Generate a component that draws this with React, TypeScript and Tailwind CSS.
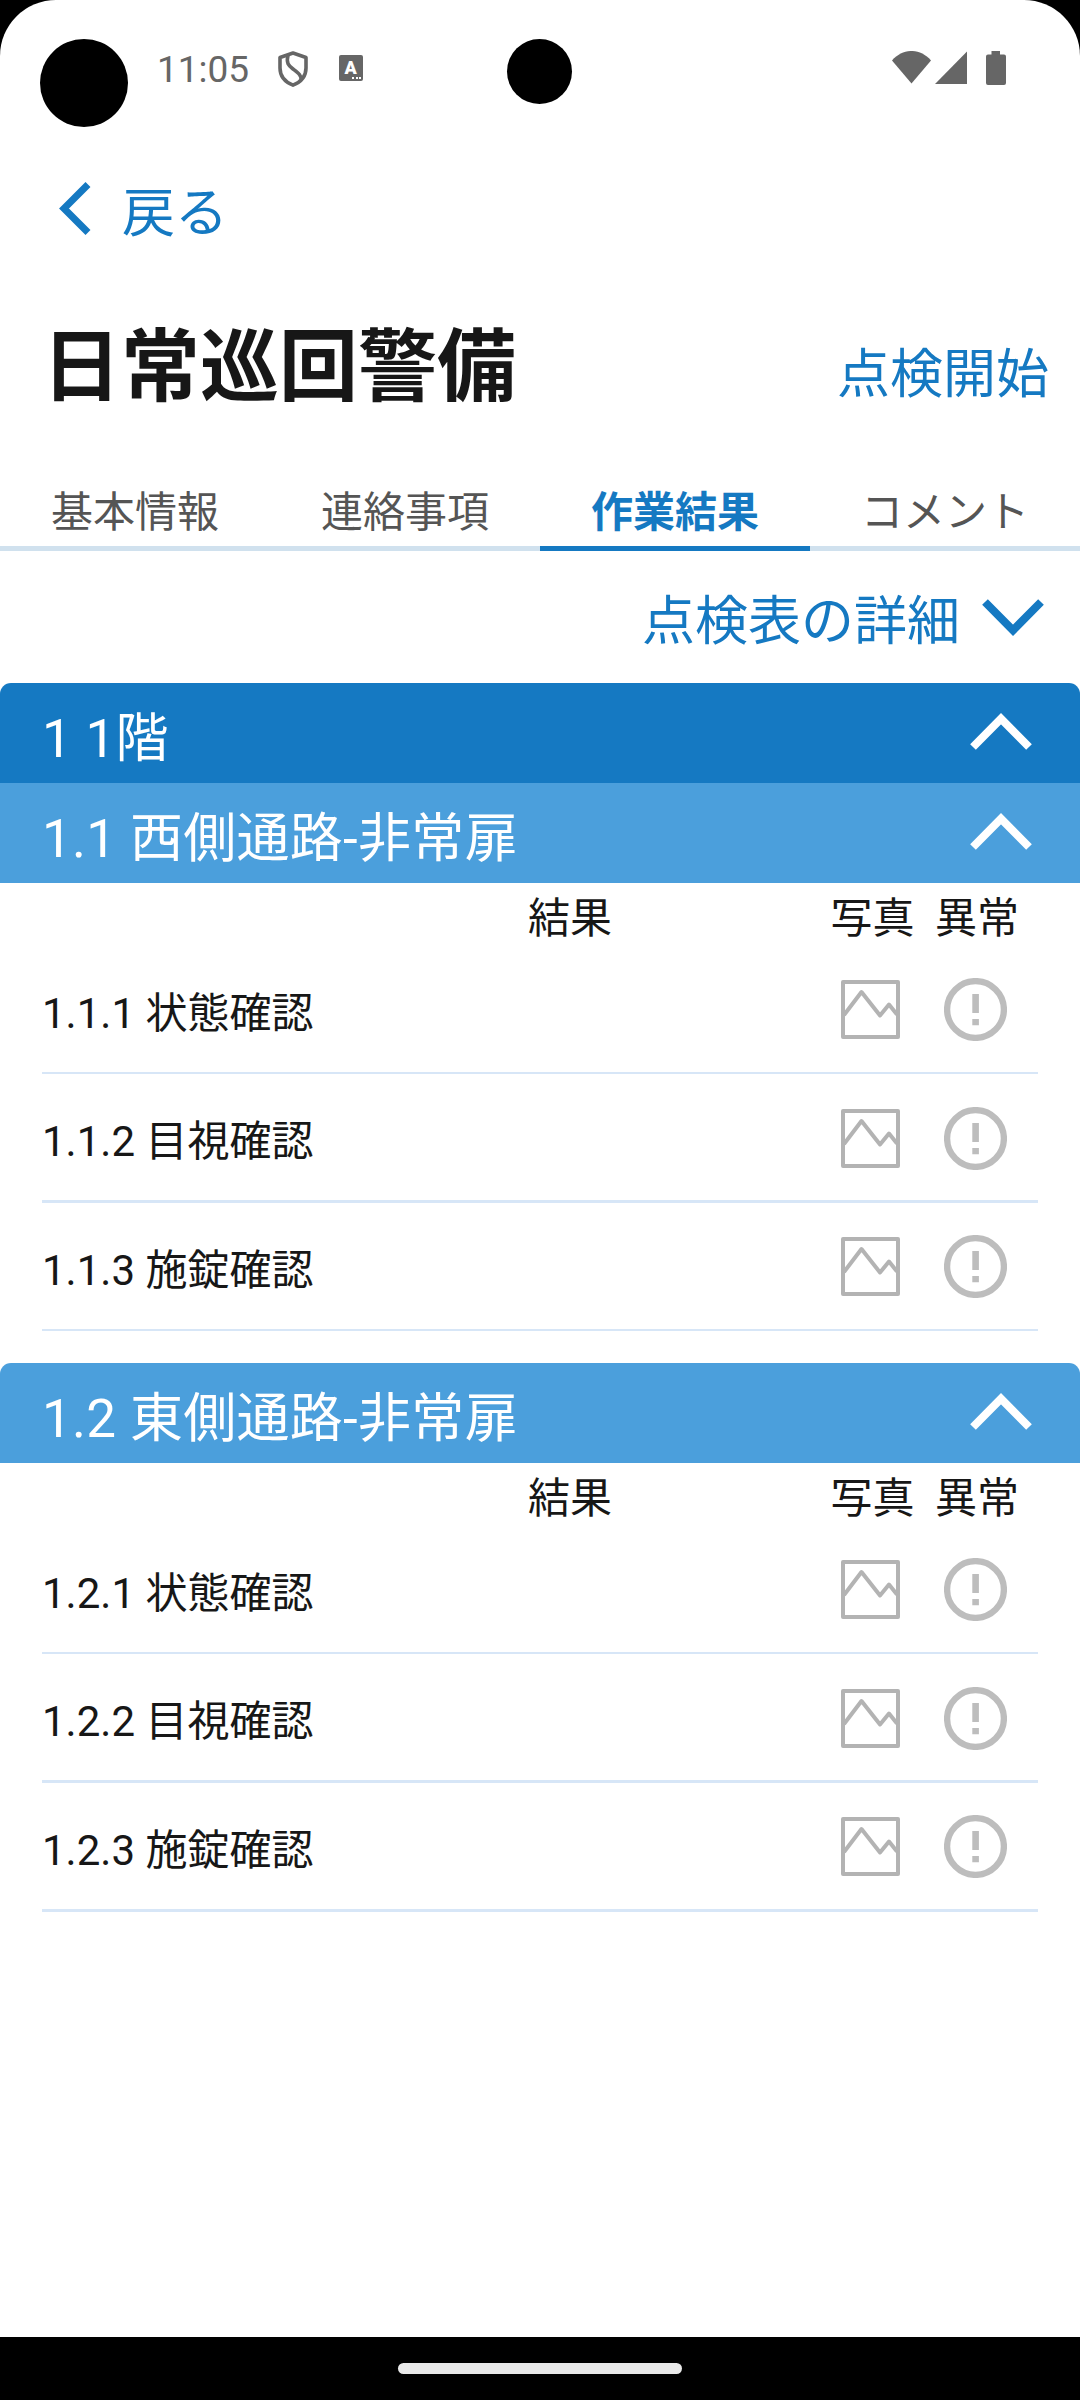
import type { ReactNode } from 'react';
import clsx from 'clsx';

interface Section {
  id: string;
  name: string;
  items: string[];
}

const TABS = ['基本情報', '連絡事項', '作業結果', 'コメント'];
const ACTIVE_TAB = '作業結果';

const SECTIONS: Section[] = [
  { id: '1.1', name: '西側通路-非常扉', items: ['状態確認', '目視確認', '施錠確認'] },
  { id: '1.2', name: '東側通路-非常扉', items: ['状態確認', '目視確認', '施錠確認'] },
];

function Chevron({ className, up = false }: { className?: string; up?: boolean }) {
  return (
    <svg width="62" height="37" viewBox="0 0 62 37" fill="none" stroke="currentColor" strokeWidth="8" className={className}>
      <path d={up ? 'M3 34 31 5.7 59 34' : 'M3 3 31 31.3 59 3'} />
    </svg>
  );
}

function StatusBar() {
  return (
    <div className="flex h-[136px] items-start pt-[39px] text-[#666]">
      <div className="ml-10 size-[88px] rounded-full bg-black" />
      <span className="ml-[29px] mt-[9px] w-[94px] text-[37px] leading-[44px]">11:05</span>
      {/* shield */}
      <svg className="ml-[27px] mt-3" width="30" height="36" viewBox="0 0 30 36" fill="none" stroke="currentColor" strokeWidth="3.6" strokeLinejoin="round">
        <path d="M15 2 28 6.500V17c0 8-5 14-13 17.200C7 31 2 25 2 17V6.500Z" />
        <path d="M10 4C8 12 10.500 14.500 15 18c5 3.800 9 6.500 8 11" />
      </svg>
      {/* keyboard badge */}
      <div className="relative ml-[31px] mt-4 h-[26px] w-6 rounded-[2px] bg-[#666]">
        <span className="absolute left-[5.500px] top-[4px] text-[18px] font-black leading-[18px] text-white">A</span>
        <span className="absolute bottom-[2px] right-[2px] flex gap-[1.500px]">
          <i className="size-[2px] bg-white" />
          <i className="size-[2px] bg-white" />
          <i className="size-[2px] bg-white" />
        </span>
      </div>
      <div className="ml-[144px] size-[65px] rounded-full bg-black" />
      <svg className="ml-[320px] mt-3" width="115" height="35" viewBox="0 0 115 35" fill="currentColor">
        <path d="M0 9.500C11-3.200 28-3.200 39 9.500L19.500 32.500Z" />
        <path d="M43 33 75 .5V33Z" />
        <path d="M99.500 0h8.500v3.500h4a2 2 0 0 1 2 2V32a2 2 0 0 1-2 2H96a2 2 0 0 1-2-2V5.500a2 2 0 0 1 2-2h3.500Z" />
      </svg>
    </div>
  );
}

function PhotoIcon() {
  return (
    <svg width="59" height="59" viewBox="0 0 59 59" fill="none" stroke="#b3b3b3" strokeWidth="4" strokeLinejoin="round">
      <rect x="2" y="2" width="55" height="55" />
      <path d="M3 35 20.500 12 39 35.500 48 24.500 56 34.500" />
    </svg>
  );
}

function AlertIcon() {
  return (
    <svg width="63" height="63" viewBox="0 0 63 63" fill="#bdbdbd">
      <circle cx="31.500" cy="31.500" r="28.400" fill="none" stroke="#bdbdbd" strokeWidth="6.300" />
      <path d="M28.300 16h6.600v19h-6.600zM28.300 41h6.600v6.300h-6.600z" />
    </svg>
  );
}

function SectionBar({ className, children }: { className?: string; children: ReactNode }) {
  return (
    <div className={clsx('flex h-[99.750px] justify-between pl-[42px] pr-12 text-[53px] tracking-[0.3px] text-white', className)}>
      <span className="mt-5 leading-[72px]">{children}</span>
      <Chevron up className="mt-[30px]" />
    </div>
  );
}

function CheckSection({ section }: { section: Section }) {
  return (
    <section className="mb-[31.500px]">
      <SectionBar className={clsx('bg-[#4b9fdc]', section.id !== '1.1' && 'rounded-t-[11px]')}>
        {section.id} {section.name}
      </SectionBar>
      <div className="flex h-[63px] pt-[6px] text-center leading-[60px]">
        <span className="ml-[518px] w-[104px]">結果</span>
        <span className="ml-[198px] w-[105px]">写真</span>
        <span className="w-[104px]">異常</span>
      </div>
      {section.items.map((item, i) => (
        <div key={item} className="mx-[42px]">
          <div className="flex h-[126px] items-center pt-[2px]">
            <span className="mt-[8px] flex-1 leading-[60px]">
              {section.id}.{i + 1} {item}
            </span>
            <PhotoIcon />
            <span className="ml-11 mr-[31px]">
              <AlertIcon />
            </span>
          </div>
          <div className="h-[2.625px] bg-[#d7e6f7]" />
        </div>
      ))}
    </section>
  );
}

export default function App() {
  return (
    <div className="h-[2400px] w-[1080px] overflow-hidden bg-black font-['Roboto','Noto_Sans_CJK_JP',sans-serif] text-[42px] text-[#171717]">
      <div className="flex h-[2337px] flex-col rounded-t-[56px] bg-white">
        <StatusBar />

        <button className="ml-[59px] mt-[46px] flex h-[60px] text-[53px] text-[#1579c2]">
          <svg width="32" height="53" viewBox="0 0 32 53" fill="none" stroke="currentColor" strokeWidth="7">
            <path d="M29 2.500 5 26.500 29 50.500" />
          </svg>
          <span className="ml-[31px] mt-[2px] leading-[60px]">戻る</span>
        </button>

        <div className="mt-[78px] flex h-[100px] justify-between pl-[42px] pr-[31px]">
          <h1 className="mt-[3px] text-[79px] font-bold leading-[90px]">日常巡回警備</h1>
          <button className="mt-[25px] h-[60px] text-[53px] leading-[60px] text-[#1579c2]">点検開始</button>
        </div>

        <nav className="mt-[50px] flex h-[81px]">
          {TABS.map((tab) => (
            <span
              key={tab}
              className={clsx(
                'w-[270px] border-b-[5px] pt-[13px] text-center leading-[60px]',
                tab === ACTIVE_TAB ? 'border-[#1579c2] font-bold text-[#1579c2]' : 'border-[#d0e1ee] text-[#555]',
              )}
            >
              {tab}
            </span>
          ))}
        </nav>

        <button className="flex h-[132px] justify-end pr-9 text-[53px] text-[#1579c2]">
          <span className="mt-[38px] leading-[66px]">点検表の詳細</span>
          <Chevron className="ml-[22px] mt-[48px]" />
        </button>

        <SectionBar className="rounded-t-[11px] bg-[#1579c2]">1 1階</SectionBar>
        {SECTIONS.map((section) => (
          <CheckSection key={section.id} section={section} />
        ))}
      </div>
      <div className="flex h-[63px] items-center justify-center">
        <div className="h-[11px] w-[284px] rounded-full bg-[#e9e9e9]" />
      </div>
    </div>
  );
}
